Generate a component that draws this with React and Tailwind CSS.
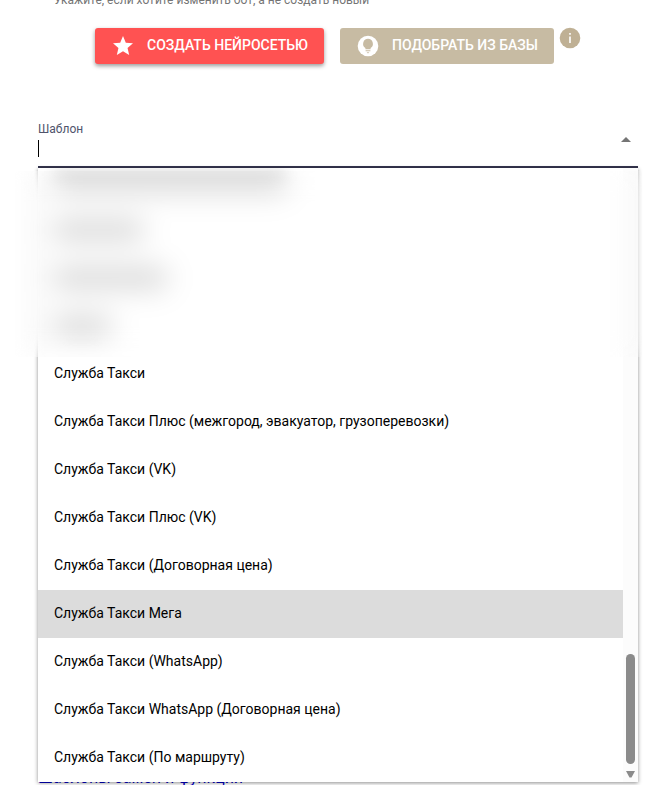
import React, { useState } from "react";

const templates = [
  "Служба Такси",
  "Служба Такси Плюс (межгород, эвакуатор, грузоперевозки)",
  "Служба Такси (VK)",
  "Служба Такси Плюс (VK)",
  "Служба Такси (Договорная цена)",
  "Служба Такси Мега",
  "Служба Такси (WhatsApp)",
  "Служба Такси WhatsApp (Договорная цена)",
  "Служба Такси (По маршруту)",
];

// rows above the visible ones, kept unreadable
const hiddenRows = ["w-58", "w-22", "w-28", "w-14"];

function StarIcon() {
  return (
    <svg viewBox="0 0 24 24" className="size-6" fill="currentColor" aria-hidden="true">
      <path d="M12 17.27L18.18 21l-1.64-7.03L22 9.24l-7.19-.61L12 2 9.19 8.63 2 9.24l5.46 4.73L5.82 21z" />
    </svg>
  );
}

function BulbIcon() {
  return (
    <svg viewBox="0 0 24 24" className="size-6" aria-hidden="true">
      <circle cx="12" cy="12" r="10.3" fill="#fff" />
      <path
        d="M12 4.8a5 5 0 0 0-2.6 9.2v1.2h5.2V14A5 5 0 0 0 12 4.8zM9.6 16.2h4.8v1H9.6zM10.6 18.2h2.8L12 19.4z"
        fill="#c7bba3"
      />
    </svg>
  );
}

function InfoIcon() {
  return (
    <svg viewBox="0 0 24 24" className="size-6" aria-hidden="true">
      <circle cx="12" cy="12" r="10.3" fill="#bfb094" />
      <path d="M11.2 7h1.6v1.8h-1.6zM11.2 10.4h1.6V17h-1.6z" fill="#fff" />
    </svg>
  );
}

function App() {
  const [query, setQuery] = useState("");
  const [active, setActive] = useState(5);

  return (
    <main className="h-screen overflow-hidden bg-white font-['Roboto',sans-serif] text-sm text-black">
      <p className="-mt-2 pl-[54px] text-xs text-[#757575]">
        Укажите, если хотите изменить бот, а не создать новый
      </p>

      {/* Actions */}
      <div className="mt-5 flex items-start justify-center gap-4 pl-3">
        <button className="flex h-9 items-center gap-3 rounded-[3px] bg-[#ff5252] px-4 font-medium whitespace-nowrap text-white uppercase shadow-[0_2px_4px_rgba(0,0,0,0.4)]">
          <StarIcon />
          <span className="pb-0.5">Создать нейросетью</span>
        </button>
        <div className="flex items-start gap-1">
          <button className="flex h-9 items-center gap-3 rounded-[3px] bg-[#c7bba3] px-4 font-medium whitespace-nowrap text-white uppercase">
            <BulbIcon />
            <span className="pb-0.5">Подобрать из базы</span>
          </button>
          <button aria-label="Информация" className="-mt-0.5">
            <InfoIcon />
          </button>
        </div>
      </div>

      {/* Template select */}
      <div className="relative mt-14 mr-[27px] ml-[38px]">
        <label htmlFor="template" className="block pt-px text-xs text-[#50546c]">
          Шаблон
        </label>
        <div className="flex h-[31px] items-start border-b-2 border-[#35354f]">
          <span className="mt-[3px] h-[17px] w-px bg-black" />
          <input
            id="template"
            role="combobox"
            aria-expanded="true"
            aria-controls="template-list"
            value={query}
            onChange={(e) => setQuery(e.target.value)}
            className="h-6 min-w-0 flex-1 caret-transparent outline-none"
          />
          <svg viewBox="0 0 10 5" className="mr-[7px] h-[5px] w-2.5" fill="#757575" aria-hidden="true">
            <path d="M0 5L5 0l5 5z" />
          </svg>
        </div>

        {/* Dropdown */}
        <div className="absolute inset-x-0 top-full flex h-[614px] bg-white shadow-[0_1px_4px_rgba(0,0,0,0.45)]">
          <ul id="template-list" role="listbox" className="flex min-w-0 flex-1 flex-col justify-end overflow-hidden">
            {hiddenRows.map((width) => (
              <li key={width} className="flex h-12 shrink-0 items-center px-4" aria-hidden="true">
                <span className={`h-5 bg-neutral-300 blur-[8px] ${width}`} />
              </li>
            ))}
            {templates.map((name, i) => (
              <li
                key={name}
                role="option"
                aria-selected={i === active}
                onMouseEnter={() => setActive(i)}
                className={`flex h-12 shrink-0 items-center px-4 pb-0.5 ${i === active ? "bg-[#dcdcdc]" : ""}`}
              >
                {name}
              </li>
            ))}
          </ul>
          <div className="flex w-[15px] flex-col items-center justify-end bg-[#fcfcfc] pb-1" aria-hidden="true">
            <div className="h-[110px] w-[9px] rounded-full bg-[#8b8b8b]" />
            <svg viewBox="0 0 9 7" className="mt-[7px] h-[7px] w-[9px]" fill="#8b8b8b">
              <path d="M0 0h9L5.5 6.5h-2z" />
            </svg>
          </div>
        </div>
        <div className="absolute top-full -right-1 -left-[23px] mt-[3px] h-[186px] backdrop-blur-[12px]" />
      </div>

      <a href="#templates" className="mt-[598px] ml-[38px] block text-base text-[#0000cc]">
        Шаблоны замен и функций
      </a>
    </main>
  );
}

export default App;
